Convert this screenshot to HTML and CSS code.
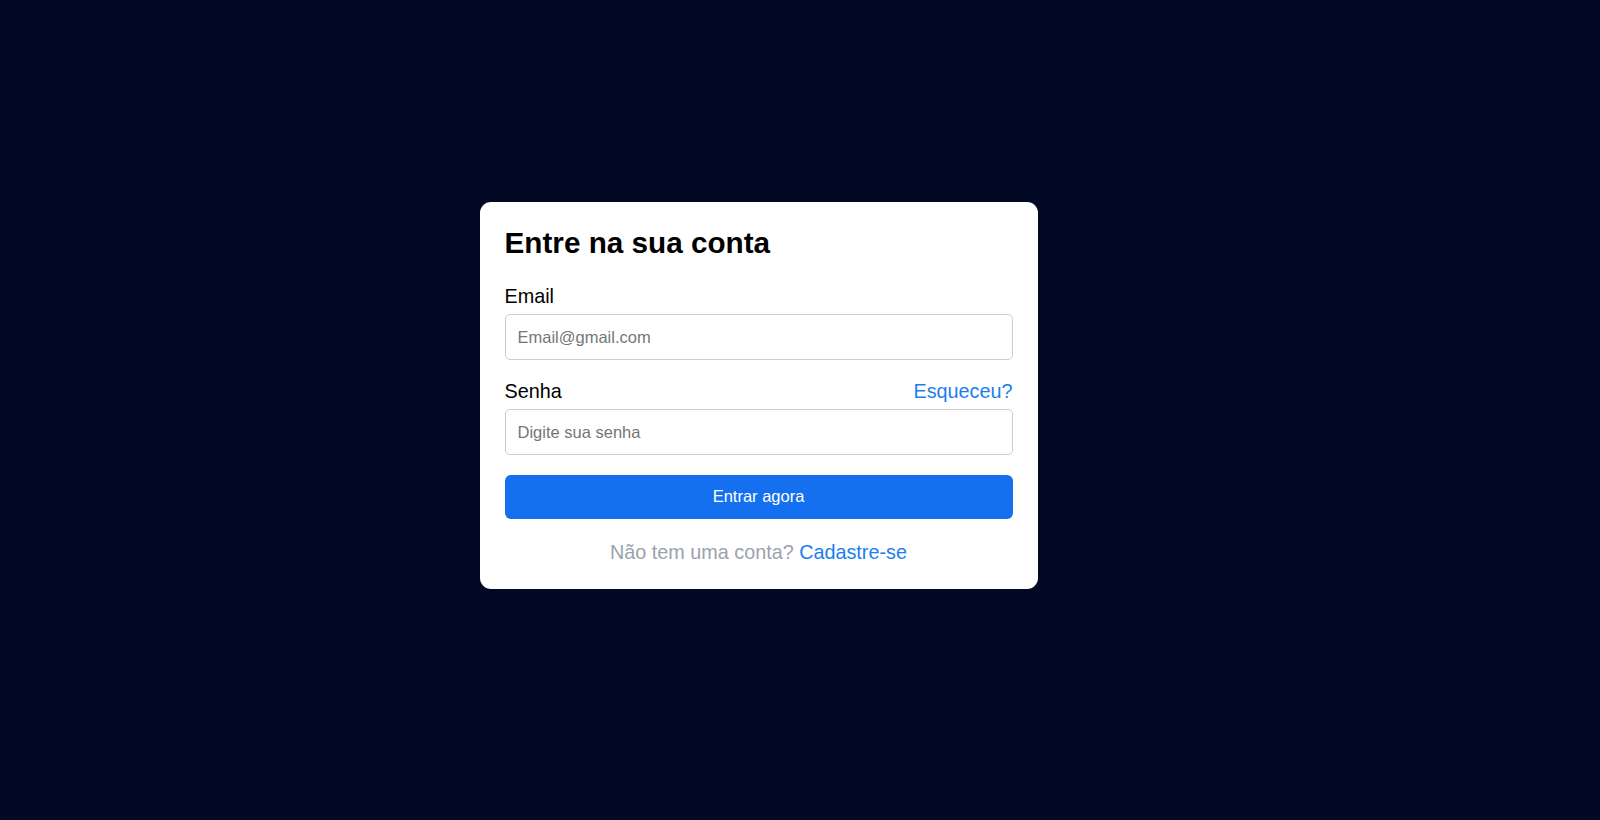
FILE: index.html
```html
<!DOCTYPE html>
<html lang="pt-BR">
<head>
<meta charset="utf-8">
<title>Entre na sua conta</title>
<link rel="stylesheet" href="styles.css">
</head>
<body>
  <main class="card">
    <h1 class="title">Entre na sua conta</h1>
    <form class="form">
      <div class="field">
        <label class="label" for="email">Email</label>
        <input class="input" id="email" type="email" placeholder="Email@gmail.com">
      </div>
      <div class="field">
        <div class="label-row">
          <label class="label" for="senha">Senha</label>
          <a class="link" href="#">Esqueceu?</a>
        </div>
        <input class="input" id="senha" type="password" placeholder="Digite sua senha">
      </div>
      <button class="button" type="button">Entrar agora</button>
    </form>
    <p class="footer">Não tem uma conta? <a class="link" href="#">Cadastre-se</a></p>
  </main>
</body>
</html>
```

FILE: styles.css
```css
* {
  box-sizing: border-box;
}

html, body {
  margin: 0;
  height: 100%;
}

body {
  background: #020924;
  font-family: "Liberation Sans", Arial, sans-serif;
  display: flex;
  justify-content: center;
  align-items: center;
  padding: 0 83px 28.5px 0;
}

.card {
  width: 558px;
  background: #ffffff;
  border-radius: 11px;
  padding: 23.5px 25px 25px 25px;
}

.title {
  margin: 0;
  font-size: 29.7px;
  font-weight: 700;
  line-height: normal;
  color: #000000;
}

.form {
  margin-top: 25px;
  display: flex;
  flex-direction: column;
}

.field {
  display: flex;
  flex-direction: column;
  gap: 6.6px;
  margin-bottom: 19.3px;
}

.label-row {
  display: flex;
  justify-content: space-between;
  align-items: baseline;
}

.label {
  font-size: 19.8px;
  line-height: normal;
  color: #000000;
}

.link {
  font-size: 19.8px;
  line-height: normal;
  color: #1a7ef0;
  text-decoration: none;
}

.input {
  height: 46px;
  width: 100%;
  border: 1px solid #cdcdcd;
  border-radius: 5px;
  padding: 0 12px;
  font-family: "Liberation Sans", Arial, sans-serif;
  font-size: 16.5px;
  color: #000000;
  background: #ffffff;
  outline: none;
}

.input::placeholder {
  color: #767676;
}

.button {
  height: 44px;
  width: 100%;
  border: none;
  border-radius: 6px;
  background: #1570ef;
  color: #ffffff;
  font-family: "Liberation Sans", Arial, sans-serif;
  font-size: 16.5px;
  cursor: pointer;
}

.footer {
  margin: 22.5px 0 0 0;
  text-align: center;
  font-size: 19.8px;
  line-height: normal;
  color: #9ba1ad;
}
```
